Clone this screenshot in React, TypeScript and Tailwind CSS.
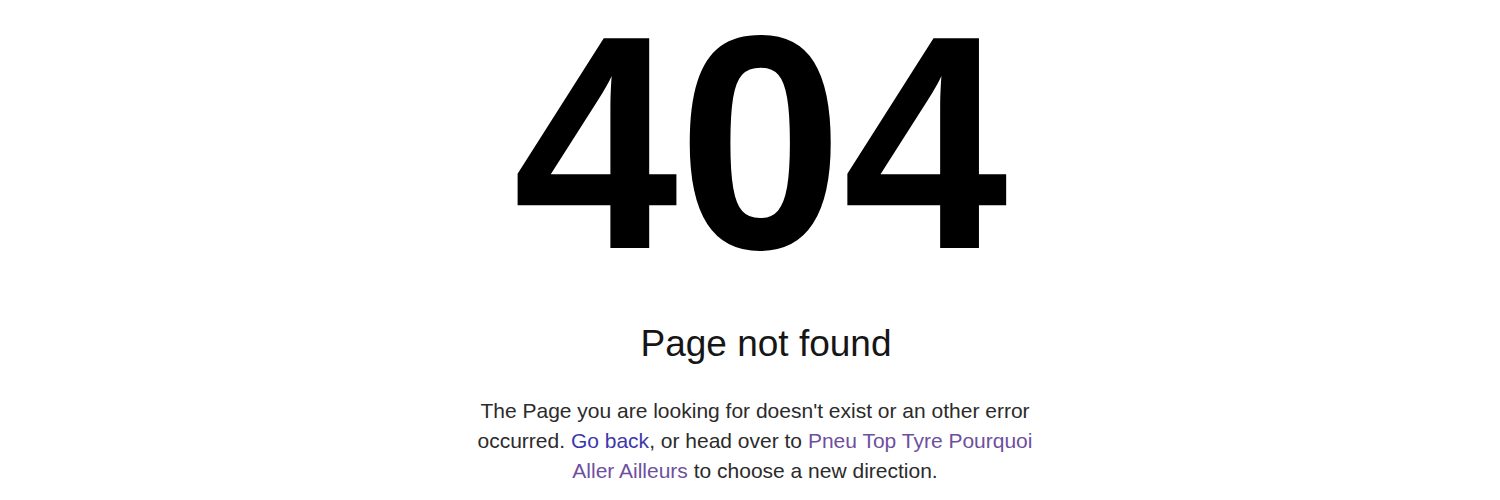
export default function App() {
  return (
    <div
      className="flex h-[500px] w-full flex-col items-center bg-white pl-[20px] text-center"
      style={{ fontFamily: '"Liberation Sans", Arial, sans-serif' }}
    >
      <h1 className="scale-x-[0.972] text-[305px] font-bold leading-[285px] text-black">404</h1>

      <h2 className="ml-[12px] mt-[39px] text-[37px] font-normal leading-[40px] text-[#161616]">
        Page not found
      </h2>

      <p className="mr-[10px] mt-[32px] max-w-[590px] text-[21px] leading-[30px] text-[#2b2b2b]">
        The Page you are looking for doesn't exist or an other error occurred.{' '}
        <a href="#" className="text-[#3d37ad]">
          Go back
        </a>
        , or head over to{' '}
        <a href="#" className="text-[#6e4f9e]">
          Pneu Top Tyre Pourquoi Aller Ailleurs
        </a>{' '}
        to choose a new direction.
      </p>
    </div>
  );
}
